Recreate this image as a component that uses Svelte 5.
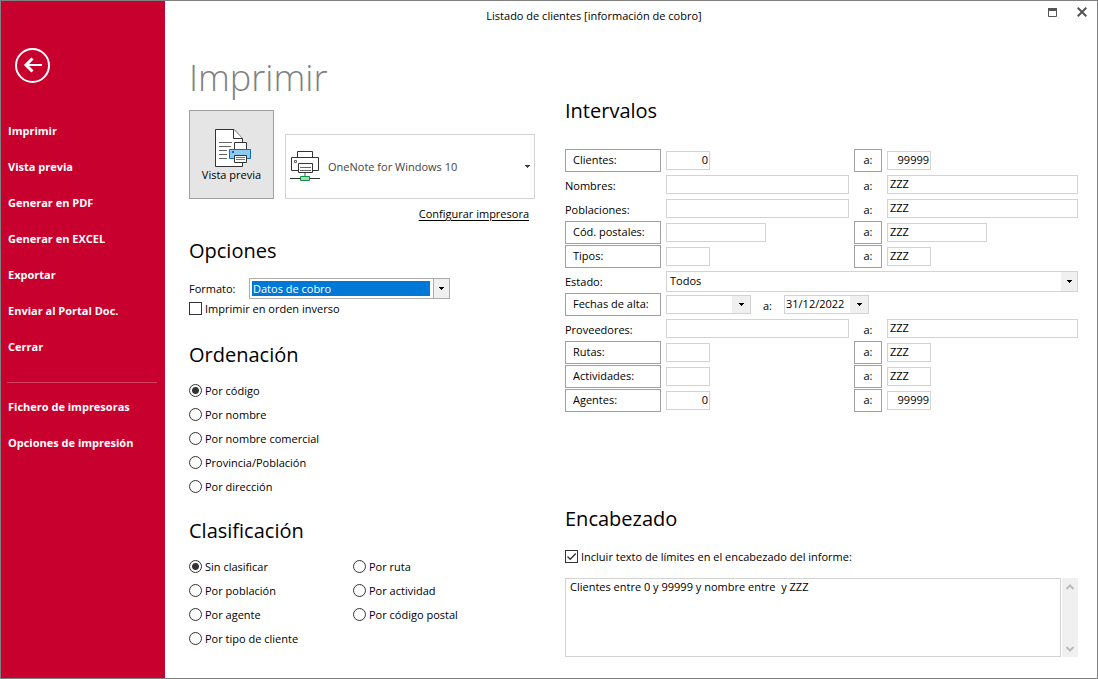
<script lang="ts">
  const mainMenu = ['Imprimir', 'Vista previa', 'Generar en PDF', 'Generar en EXCEL', 'Exportar', 'Enviar al Portal Doc.', 'Cerrar'];
  const extraMenu = ['Fichero de impresoras', 'Opciones de impresión'];

  const orders = ['Por código', 'Por nombre', 'Por nombre comercial', 'Provincia/Población', 'Por dirección'];
  const groups = ['Sin clasificar', 'Por ruta', 'Por población', 'Por actividad', 'Por agente', 'Por código postal', 'Por tipo de cliente'];

  let order = $state('Por código');
  let group = $state('Sin clasificar');
  let reverse = $state(false);
  let includeLimits = $state(true);
  let header = $state('Clientes entre 0 y 99999 y nombre entre  y ZZZ');

  let ranges = $state([
    { id: 'clientes', label: 'Clientes:', kind: 'num', size: 'short', lookup: true, from: '0', to: '99999' },
    { id: 'nombres', label: 'Nombres:', kind: 'text', size: 'full', lookup: false, from: '', to: 'ZZZ' },
    { id: 'poblaciones', label: 'Poblaciones:', kind: 'text', size: 'full', lookup: false, from: '', to: 'ZZZ' },
    { id: 'postales', label: 'Cód. postales:', kind: 'text', size: 'medium', lookup: true, from: '', to: 'ZZZ' },
    { id: 'tipos', label: 'Tipos:', kind: 'text', size: 'short', lookup: true, from: '', to: 'ZZZ' },
    { id: 'estado', label: 'Estado:', kind: 'select', size: 'full', lookup: false, from: 'Todos', to: '' },
    { id: 'fechas', label: 'Fechas de alta:', kind: 'date', size: 'short', lookup: true, from: '', to: '31/12/2022' },
    { id: 'proveedores', label: 'Proveedores:', kind: 'text', size: 'full', lookup: false, from: '', to: 'ZZZ' },
    { id: 'rutas', label: 'Rutas:', kind: 'text', size: 'short', lookup: true, from: '', to: 'ZZZ' },
    { id: 'actividades', label: 'Actividades:', kind: 'text', size: 'short', lookup: true, from: '', to: 'ZZZ' },
    { id: 'agentes', label: 'Agentes:', kind: 'num', size: 'short', lookup: true, from: '0', to: '99999' }
  ]);
</script>

{#snippet arrow()}
  <svg width="5" height="3" viewBox="0 0 5 3" aria-hidden="true"><path d="M0 0h5v1h-1v1h-1v1h-1v-1h-1v-1h-1z" fill="currentColor" /></svg>
{/snippet}

<div class="window">
  <nav class="sidebar">
    <button class="back" aria-label="Volver">
      <svg width="35" height="35" viewBox="0 0 35 35" fill="none" stroke="#fff">
        <circle cx="17.5" cy="17.5" r="16.5" stroke-width="2" />
        <path d="M27 17H11" stroke-width="2" />
        <path d="M17.5 10.5L11 17L17.5 23.5" stroke-width="3" />
      </svg>
    </button>
    {#each mainMenu as item}
      <button class="item">{item}</button>
    {/each}
    <hr />
    {#each extraMenu as item}
      <button class="item">{item}</button>
    {/each}
  </nav>

  <div class="main">
    <header>
      <div class="title">Listado de clientes [información de cobro]</div>
      <button class="control" aria-label="Maximizar">
        <svg width="9" height="9" viewBox="0 0 9 9"><path d="M0.5 0.5h8v8h-8z" fill="none" stroke="#555" /><path d="M0 0h9v3h-9z" fill="#555" /></svg>
      </button>
      <button class="control" aria-label="Cerrar ventana">
        <svg width="10" height="10" viewBox="0 0 10 10"><path d="M0.7 0.7l8.6 8.6M9.3 0.7l-8.6 8.6" stroke="#555" stroke-width="2" /></svg>
      </button>
    </header>

    <div class="content">
      <section class="left">
        <h1>Imprimir</h1>
        <div class="output">
          <button class="preview">
            <svg width="37" height="38" viewBox="0 0 37 38" fill="#fff" stroke="#333">
              <path d="M0.5 0.5H19L27.5 9.5V37.5H0.5z" />
              <path d="M18.5 0.5V9.5H27.5" />
              <path d="M4 13.5h13M4 17.5h12M4 21.5h8M4 25.5h8M4 29.5h8" stroke="#666" />
              <path d="M19.5 13.5h12v7h-12z" />
              <path d="M14.5 20.5h21v9h-21z" fill="#90c8f0" stroke="#0f6cbd" />
              <path d="M17 22h2v2h-2z" fill="#0f6cbd" stroke="none" />
              <path d="M19.5 26.5h12v7h-12z" />
              <path d="M21 28.5h9M21 30.5h9" stroke="#777" />
            </svg>
            <span>Vista previa</span>
          </button>
          <div class="combo printer">
            <svg class="device" width="30" height="31" viewBox="0 0 30 31" fill="#fff" stroke="#333">
              <path d="M7.5 0.5h15v6h-15z" />
              <path d="M1.5 6.5h27v13h-27z" />
              <path d="M4.5 9.5h2v2h-2z" stroke="#666" />
              <path d="M8.5 12.5h14v9h-14z" />
              <path d="M10 16.5h11M10 19.5h11" stroke="#666" />
              <path d="M15 22v3" stroke="#aaa" stroke-width="2" />
              <path d="M0 27.5h30" />
              <path d="M10.5 25.5h9v4h-9z" fill="#a8dcb5" stroke="#109040" />
            </svg>
            <select aria-label="Impresora"><option>OneNote for Windows 10</option></select>
            <span class="drop">{@render arrow()}</span>
          </div>
        </div>
        <a class="setup" href="#configurar">Configurar impresora</a>

        <h2>Opciones</h2>
        <div class="format">
          <label for="formato">Formato:</label>
          <div class="combo selected">
            <select id="formato"><option>Datos de cobro</option></select>
            <span class="drop">{@render arrow()}</span>
          </div>
        </div>
        <label class="choice reverse"><input type="checkbox" bind:checked={reverse} />Imprimir en orden inverso</label>

        <h2 class="order-title">Ordenación</h2>
        <div class="choices">
          {#each orders as name}
            <label class="choice"><input type="radio" name="orden" value={name} bind:group={order} />{name}</label>
          {/each}
        </div>

        <h2 class="group-title">Clasificación</h2>
        <div class="choices two">
          {#each groups as name}
            <label class="choice"><input type="radio" name="clasificacion" value={name} bind:group={group} />{name}</label>
          {/each}
        </div>
      </section>

      <section class="right">
        <h2>Intervalos</h2>
        <div class="ranges">
          {#each ranges as r}
            <div class="range">
              {#if r.lookup}
                <button class="lookup">{r.label}</button>
              {:else}
                <label for={r.id}>{r.label}</label>
              {/if}
              {#if r.kind === 'select'}
                <div class="combo status">
                  <select id={r.id} bind:value={r.from}><option>Todos</option></select>
                  <span class="drop">{@render arrow()}</span>
                </div>
              {:else if r.kind === 'date'}
                <div class="dates">
                  <div class="date">
                    <input type="text" aria-label="{r.label} desde" bind:value={r.from} />
                    <button aria-label="Abrir calendario">{@render arrow()}</button>
                  </div>
                  <label for={r.id}>a:</label>
                  <div class="date">
                    <input id={r.id} type="text" bind:value={r.to} />
                    <button aria-label="Abrir calendario">{@render arrow()}</button>
                  </div>
                </div>
              {:else}
                <input id={r.id} class={[r.kind, r.size]} type="text" aria-label="{r.label} desde" bind:value={r.from} />
                {#if r.lookup}
                  <button class="lookup to">a:</button>
                {:else}
                  <label class="to" for="{r.id}-hasta">a:</label>
                {/if}
                <input id="{r.id}-hasta" class={[r.kind, r.size]} type="text" aria-label="{r.label} hasta" bind:value={r.to} />
              {/if}
            </div>
          {/each}
        </div>

        <h2 class="header-title">Encabezado</h2>
        <label class="choice include"><input type="checkbox" bind:checked={includeLimits} />Incluir texto de límites en el encabezado del informe:</label>
        <div class="memo">
          <textarea aria-label="Encabezado" bind:value={header}></textarea>
          <div class="scroll">
            <button aria-label="Subir"><svg width="8" height="6" viewBox="0 0 8 6"><path d="M0.5 5L4 1.5L7.5 5" /></svg></button>
            <button aria-label="Bajar"><svg width="8" height="6" viewBox="0 0 8 6"><path d="M0.5 1L4 4.5L7.5 1" /></svg></button>
          </div>
        </div>
      </section>
    </div>
  </div>
</div>

<style>
  * { box-sizing: border-box; }
  button, input, select, textarea { font: inherit; color: inherit; margin: 0; border-radius: 0; outline: none; }
  button { background: none; border: 0; padding: 0; }
  svg { display: block; flex: none; }

  .window {
    display: flex;
    min-height: 100vh;
    border: 1px solid #808080;
    background: #fff;
    color: #000;
    font: 11px/16px 'Segoe UI', 'Open Sans', 'Noto Sans', sans-serif;
  }

  .sidebar { width: 164px; flex: none; padding: 47px 7px 0; background: #c8002d; color: #fff; }
  .back { display: block; margin: 0 7px 30px; }
  .item { display: block; width: 100%; height: 36px; text-align: left; font-weight: 700; white-space: nowrap; }
  .sidebar hr { margin: 17px 1px 6px -1px; border: 0; border-top: 1px solid #d64060; }

  .main { flex: 1; min-width: 0; }
  header { display: flex; align-items: center; height: 30px; }
  .title { flex: 1; padding-right: 14px; text-align: center; }
  .control { display: grid; place-items: center; width: 30px; height: 22px; padding-bottom: 8px; }

  .content { display: grid; grid-template-columns: 346px 1fr; gap: 30px; padding: 22px 19px 20px 24px; }
  h1 { margin: 0 0 8px; font-size: 36px; line-height: 49px; font-weight: 300; color: #808080; }
  h2 { margin: 0; font-size: 20px; line-height: 28px; font-weight: 400; }

  .output { display: flex; align-items: flex-end; gap: 11px; }
  .preview {
    display: grid;
    justify-items: center;
    align-content: start;
    width: 85px;
    height: 89px;
    padding-top: 18px;
    border: 1px solid #a0a0a0;
    background: #e5e5e5;
  }
  .preview svg { margin-left: 4px; }

  .combo { position: relative; display: flex; height: 21px; }
  .combo select { appearance: none; width: 100%; padding: 0 20px 0 3px; border: 1px solid #d3d3d3; background: #fff; }
  .drop {
    position: absolute;
    top: 1px;
    right: 1px;
    bottom: 1px;
    width: 16px;
    display: grid;
    place-items: center;
    background: #f0f0f0;
    pointer-events: none;
  }
  .printer { flex: 1; height: 65px; }
  .printer select { padding-left: 42px; color: #444; }
  .printer .drop { background: none; color: #444; width: 13px; }
  .device { position: absolute; left: 5px; top: 17px; pointer-events: none; }
  .selected { width: 201px; }
  .selected select {
    border-color: #acacac;
    color: #fff;
    background: linear-gradient(#0078d7, #0078d7) 2px 2px / calc(100% - 21px) 15px no-repeat #fff;
  }
  .selected .drop { border-left: 1px solid #acacac; }

  .setup { display: block; margin: 5px 6px 13px 0; line-height: 20px; text-align: right; color: #000; text-underline-offset: 2px; }
  .format { display: flex; align-items: center; margin-top: 13px; }
  .format label { width: 60px; }

  .choice { display: flex; align-items: center; gap: 3px; height: 24px; }
  .choice input { appearance: none; width: 13px; height: 13px; flex: none; margin-bottom: 2px; border: 1px solid #333; background: #fff; }
  .choice input[type='radio'] { border-radius: 50%; }
  .choice input[type='radio']:checked { background: radial-gradient(circle, #333 3px, #fff 4px); }
  .choice input[type='checkbox']:checked {
    background: url("data:image/svg+xml,%3Csvg xmlns='http://www.w3.org/2000/svg' viewBox='0 0 11 11'%3E%3Cpath d='M1.5 5.5L4.2 8.3L9.8 2.5' fill='none' stroke='%23333' stroke-width='1.3'/%3E%3C/svg%3E");
  }
  .reverse { height: 20px; }
  .order-title { margin: 22px 0 10px; }
  .group-title { margin: 18px 0 10px; }
  .two { display: grid; grid-template-columns: 164px 1fr; }

  .right { padding-top: 44px; }
  .ranges { margin-top: 23px; }
  .range { display: grid; grid-template-columns: 96px 183fr 28px 191fr; column-gap: 5px; align-items: center; height: 24px; }
  .range label { padding-top: 3px; }
  .lookup { height: 23px; padding-left: 7px; border: 1px solid #a0a0a0; text-align: left; }
  .range .lookup.to { padding: 0; }
  .range .to { text-align: center; }
  .range input { width: 100%; height: 19px; padding: 0 2px 1px; border: 1px solid #d3d3d3; background: #fff; }
  .range input.short { width: 44px; }
  .range input.medium { width: 100px; }
  .range input.num { padding-right: 1px; text-align: right; }
  .status, .dates { grid-column: 2 / -1; }
  .status { margin-top: 2px; }
  .dates { display: flex; align-items: center; }
  .dates label { width: 33px; text-align: center; }
  .date { display: flex; width: 85px; height: 19px; border: 1px solid #d3d3d3; }
  .date input { flex: 1; min-width: 0; height: 17px; padding: 0 1px 1px; border: 0; }
  .date button { display: grid; place-items: center; width: 18px; background: #f0f0f0; }

  .header-title { margin: 93px 0 12px; }
  .memo { display: flex; gap: 1px; height: 79px; margin-top: 9px; }
  textarea { flex: 1; min-width: 0; padding: 0 4px; border: 1px solid #d3d3d3; background: #fff; resize: none; overflow: hidden; }
  .scroll { display: flex; flex-direction: column; justify-content: space-between; width: 16px; background: #f0f0f0; }
  .scroll button { display: grid; place-items: center; height: 17px; }
  .scroll path { fill: none; stroke: #bbb; stroke-width: 2; }
</style>
